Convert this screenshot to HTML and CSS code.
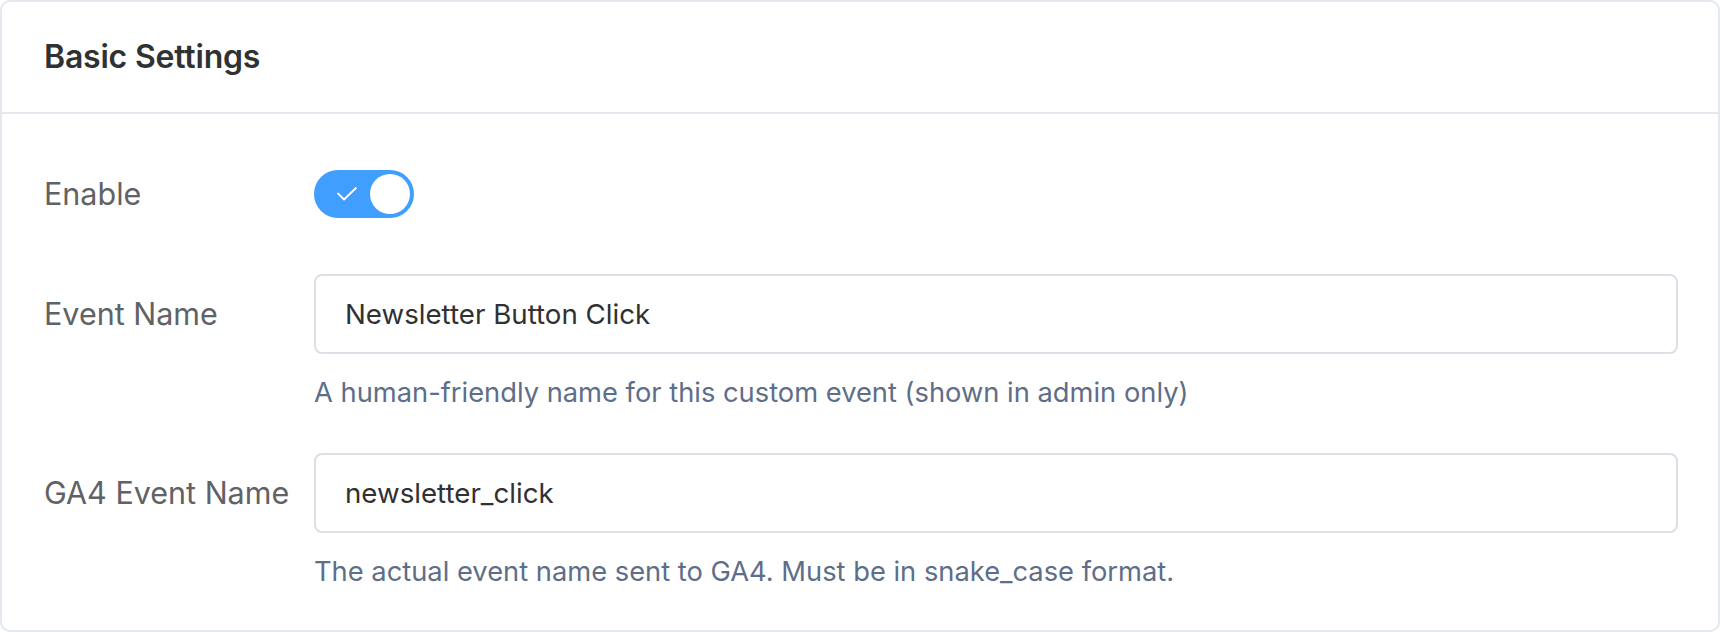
FILE: index.html
```html
<!DOCTYPE html>
<html lang="en">
<head>
<meta charset="utf-8">
<title>Basic Settings</title>
<link rel="stylesheet" href="styles.css">
</head>
<body>
<div class="card">
  <div class="card-header">
    <h2 class="card-title">Basic Settings</h2>
  </div>
  <div class="card-body">
    <div class="form-row">
      <label class="form-label">Enable</label>
      <div class="form-control">
        <span class="switch is-on">
          <svg class="switch-check" width="100" height="48" viewBox="0 0 100 48">
            <polyline points="24,23.5 30,29.5 42,18" fill="none" stroke="#ffffff" stroke-width="1.8" stroke-linecap="round" stroke-linejoin="round"/>
          </svg>
          <span class="switch-knob"></span>
        </span>
      </div>
    </div>
    <div class="form-row has-help">
      <label class="form-label">Event Name</label>
      <div class="form-control">
        <div class="input"><span class="input-text">Newsletter Button Click</span></div>
        <div class="help">A human-friendly name for this custom event (shown in admin only)</div>
      </div>
    </div>
    <div class="form-row has-help last">
      <label class="form-label">GA4 Event Name</label>
      <div class="form-control">
        <div class="input"><span class="input-text">newsletter_click</span></div>
        <div class="help">The actual event name sent to GA4. Must be in snake_case format.</div>
      </div>
    </div>
  </div>
</div>
</body>
</html>
```
FILE: styles.css
```css
* { box-sizing: border-box; }
html, body { margin: 0; padding: 0; background: #ffffff; }
body {
  font-family: Inter, "Noto Sans", "Liberation Sans", sans-serif;
  color: #303133;
}
.card {
  width: 1720px;
  height: 632px;
  border: 2px solid #e4e7ed;
  border-radius: 10px;
  background: #ffffff;
  overflow: hidden;
}
.card-header {
  padding: 31px 42px 31px;
  border-bottom: 2px solid #e4e7ed;
}
.card-title {
  margin: 0;
  font-size: 32px;
  line-height: 48px;
  font-weight: 600;
  color: #303133;
  letter-spacing: -0.2px;
}
.card-body {
  padding: 40px 40px 0 42px;
}
.form-row {
  display: flex;
  align-items: flex-start;
  margin-bottom: 40px;
}
.form-row.has-help { margin-bottom: 41px; }
.form-row.last { margin-bottom: 0; }
.form-label {
  flex: 0 0 270px;
  font-size: 30.5px;
  line-height: 80px;
  height: 80px;
  color: #606266;
  white-space: nowrap;
}
.form-control {
  flex: 1;
  min-height: 80px;
  display: flex;
  flex-direction: column;
  justify-content: center;
}
.switch {
  position: relative;
  display: inline-block;
  width: 100px;
  height: 48px;
  border-radius: 24px;
  background: #409eff;
}
.switch-check {
  position: absolute;
  left: 0;
  top: 0;
}
.switch-knob {
  position: absolute;
  right: 4px;
  top: 4px;
  width: 40px;
  height: 40px;
  border-radius: 50%;
  background: #ffffff;
}
.input {
  height: 80px;
  border: 2px solid #dcdfe6;
  border-radius: 8px;
  padding: 0 29px;
  display: flex;
  align-items: center;
  background: #ffffff;
}
.input-text {
  font-size: 27.7px;
  color: #303133;
}
.help {
  margin-top: 20px;
  font-size: 27.3px;
  line-height: 38px;
  color: #5e6e88;
}
```
